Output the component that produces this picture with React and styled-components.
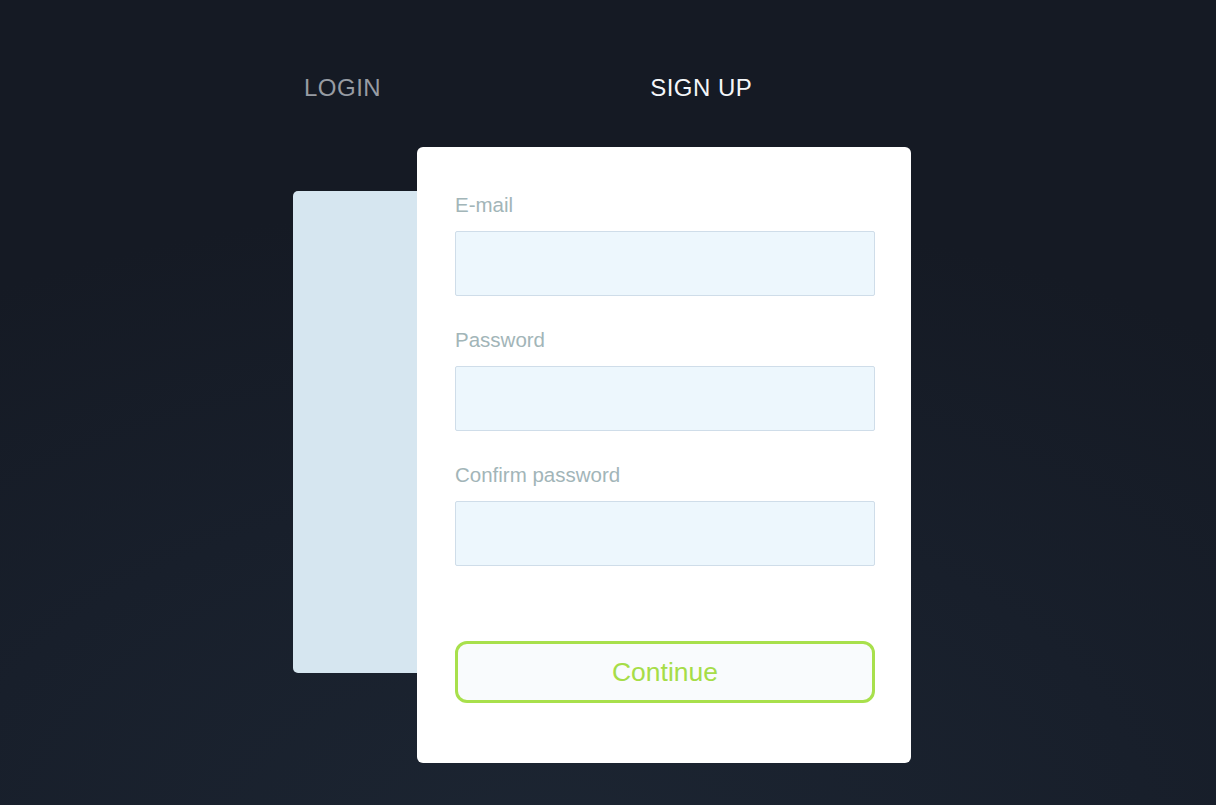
import styled, { createGlobalStyle } from 'styled-components';

const GlobalStyle = createGlobalStyle`
  html, body { margin: 0; padding: 0; }
  body {
    min-height: 100vh;
    font-family: "Liberation Sans", Arial, sans-serif;
    background: radial-gradient(ellipse 90% 80% at 45% 105%, #1c2532 0%, #181f2b 55%, #151a24 100%);
  }
  * { box-sizing: border-box; }
`;

const Page = styled.div`
  min-height: 805px;
  padding-top: 74px;
`;

const Wrapper = styled.div`
  width: 630px;
  margin: 0 auto;
`;

const Tabs = styled.div`
  display: flex;
  gap: 269px;
  padding-left: 11px;
  height: 28px;
`;

const Tab = styled.button`
  background: none;
  border: 0;
  padding: 0;
  font-family: inherit;
  font-size: 24px;
  line-height: 28px;
  letter-spacing: 0.5px;
  text-transform: uppercase;
  color: ${({ $active }) => ($active ? '#f4f6f9' : '#979ca3')};
  cursor: pointer;
`;

const Stage = styled.div`
  display: flex;
  align-items: flex-start;
  margin-top: 45px;
`;

const BackCard = styled.div`
  width: 160px;
  height: 482px;
  margin-top: 44px;
  margin-right: -36px;
  background: #d6e6f0;
  border-radius: 5px;
`;

const Card = styled.form`
  position: relative;
  z-index: 1;
  width: 494px;
  background: #ffffff;
  border-radius: 6px;
  padding: 46px 36px 60px 38px;
  display: flex;
  flex-direction: column;
`;

const Field = styled.div`
  display: flex;
  flex-direction: column;
  gap: 14px;
  & + & { margin-top: 32px; }
`;

const Label = styled.label`
  font-size: 20.5px;
  line-height: 24px;
  color: #a2b5b8;
`;

const Input = styled.input`
  height: 65px;
  width: 100%;
  background: #edf7fd;
  border: 1px solid #cfdde9;
  border-radius: 2px;
  outline: none;
  padding: 0 14px;
  font-family: inherit;
  font-size: 18px;
`;

const Continue = styled.button`
  margin-top: 75px;
  height: 62px;
  width: 100%;
  background: #f9fbfd;
  border: 3px solid #a8e04c;
  border-radius: 12px;
  color: #a6dd48;
  font-family: inherit;
  font-size: 26.5px;
  cursor: pointer;
`;

export default function App() {
  return (
    <>
      <GlobalStyle />
      <Page>
        <Wrapper>
          <Tabs>
            <Tab type="button">Login</Tab>
            <Tab type="button" $active>Sign up</Tab>
          </Tabs>
          <Stage>
            <BackCard />
            <Card onSubmit={(e) => e.preventDefault()}>
              <Field>
                <Label htmlFor="email">E-mail</Label>
                <Input id="email" type="email" />
              </Field>
              <Field>
                <Label htmlFor="password">Password</Label>
                <Input id="password" type="password" />
              </Field>
              <Field>
                <Label htmlFor="confirm">Confirm password</Label>
                <Input id="confirm" type="password" />
              </Field>
              <Continue type="submit">Continue</Continue>
            </Card>
          </Stage>
        </Wrapper>
      </Page>
    </>
  );
}
